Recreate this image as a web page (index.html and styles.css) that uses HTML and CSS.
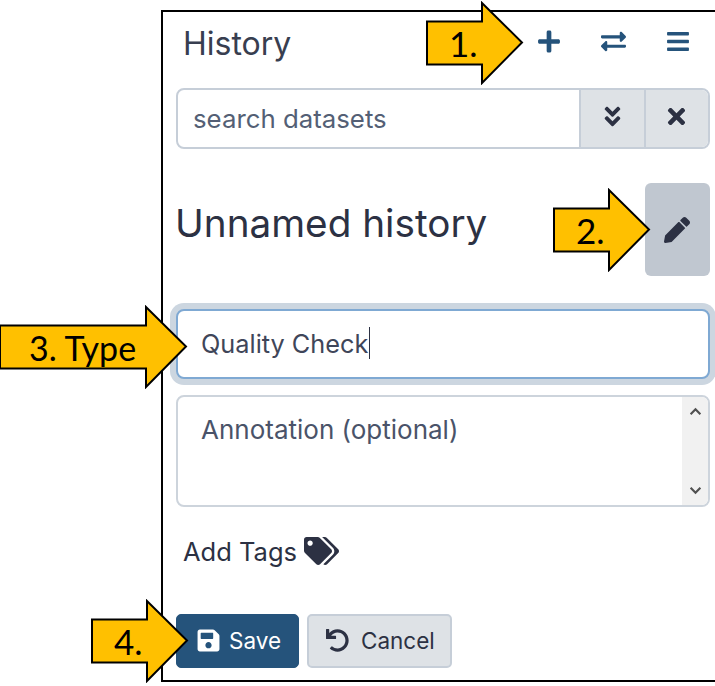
FILE: index.html
```html
<!DOCTYPE html>
<html lang="en">
<head>
  <meta charset="UTF-8">
  <title>Create a new history</title>
  <link rel="stylesheet" href="styles.css">
</head>
<body>
  <div class="panel">
    <div class="panel-header">
      <span class="panel-title">History</span>
      <div class="header-actions">
        <button class="icon-button"><svg class="icon icon-plus" viewBox="0 0 448 512"><path d="M416 208H272V64c0-17.67-14.33-32-32-32h-32c-17.67 0-32 14.33-32 32v144H32c-17.67 0-32 14.33-32 32v32c0 17.67 14.33 32 32 32h144v144c0 17.67 14.33 32 32 32h32c17.67 0 32-14.33 32-32V304h144c17.67 0 32-14.33 32-32v-32c0-17.67-14.33-32-32-32z"/></svg></button>
        <button class="icon-button"><svg class="icon icon-switch" viewBox="0 0 512 512"><path d="M0 168v-16c0-13.255 10.745-24 24-24h360V80c0-21.367 25.899-32.042 40.971-16.971l80 80c9.372 9.373 9.372 24.569 0 33.941l-80 80C409.956 271.982 384 261.456 384 240v-48H24c-13.255 0-24-10.745-24-24zm488 152H128v-48c0-21.314-25.862-32.08-40.971-16.971l-80 80c-9.372 9.373-9.372 24.569 0 33.941l80 80C102.057 463.997 128 453.437 128 432v-48h360c13.255 0 24-10.745 24-24v-16c0-13.255-10.745-24-24-24z"/></svg></button>
        <button class="icon-button"><svg class="icon icon-bars" viewBox="0 0 448 512"><path d="M16 132h416c8.837 0 16-7.163 16-16V76c0-8.837-7.163-16-16-16H16C7.163 60 0 67.163 0 76v40c0 8.837 7.163 16 16 16zm0 160h416c8.837 0 16-7.163 16-16v-40c0-8.837-7.163-16-16-16H16c-8.837 0-16 7.163-16 16v40c0 8.837 7.163 16 16 16zm0 160h416c8.837 0 16-7.163 16-16v-40c0-8.837-7.163-16-16-16H16c-8.837 0-16 7.163-16 16v40c0 8.837 7.163 16 16 16z"/></svg></button>
      </div>
    </div>

    <div class="search">
      <span class="search-text">search datasets</span>
      <button class="search-button"><svg class="icon icon-small" viewBox="0 0 320 512"><path d="M143 256.3L7 120.3c-9.4-9.4-9.4-24.6 0-33.9l22.6-22.6c9.4-9.4 24.6-9.4 33.9 0l96.4 96.4 96.4-96.4c9.4-9.4 24.6-9.4 33.9 0L313 86.3c9.4 9.4 9.4 24.6 0 33.9l-136 136c-9.4 9.5-24.6 9.5-34 .1zm34 192l136-136c9.4-9.4 9.4-24.6 0-33.9l-22.6-22.6c-9.4-9.4-24.6-9.4-33.9 0L160 352.1l-96.4-96.4c-9.4-9.4-24.6-9.4-33.9 0L7 278.3c-9.4 9.4-9.4 24.6 0 33.9l136 136c9.4 9.5 24.6 9.5 34 .1z"/></svg></button>
      <button class="search-button"><svg class="icon icon-small" viewBox="0 0 352 512"><path d="M242.72 256l100.07-100.07c12.28-12.28 12.28-32.19 0-44.48l-22.24-22.24c-12.28-12.28-32.19-12.28-44.48 0L176 189.28 75.93 89.21c-12.28-12.28-32.19-12.28-44.48 0L9.21 111.45c-12.28 12.28-12.28 32.19 0 44.48L109.28 256 9.21 356.07c-12.28 12.28-12.28 32.19 0 44.48l22.24 22.24c12.28 12.28 32.2 12.28 44.48 0L176 322.72l100.07 100.07c12.28 12.28 32.2 12.28 44.48 0l22.24-22.24c12.28-12.28 12.28-32.19 0-44.48L242.72 256z"/></svg></button>
    </div>

    <div class="name-row">
      <h1 class="history-name">Unnamed history</h1>
      <button class="edit-button"><svg class="icon icon-pen" viewBox="0 0 512 512"><path d="M497.9 142.1l-46.1 46.1c-4.7 4.7-12.3 4.7-17 0l-111-111c-4.7-4.7-4.7-12.3 0-17l46.1-46.1c18.7-18.7 49.1-18.7 67.9 0l60.1 60.1c18.8 18.7 18.8 49.1 0 67.9zM284.2 99.8L21.6 362.4.4 483.9c-2.9 16.4 11.4 30.6 27.8 27.8l121.5-21.3 262.6-262.6c4.7-4.7 4.7-12.3 0-17l-111-111c-4.8-4.7-12.4-4.7-17.1 0z"/></svg></button>
    </div>

    <div class="name-field"><span>Quality Check</span><span class="caret"></span></div>

    <div class="annotation">
      <span class="annotation-text">Annotation (optional)</span>
      <div class="scrollbar">
        <svg class="scroll-arrow" viewBox="0 0 12 8"><path d="M1.5 6.5 6 2l4.500 4.500"/></svg>
        <svg class="scroll-arrow" viewBox="0 0 12 8"><path d="M1.500 1.500 6 6l4.500-4.500"/></svg>
      </div>
    </div>

    <div class="tags-row">
      <span>Add Tags</span>
      <svg class="icon icon-tags" viewBox="0 0 640 512"><path d="M497.941 225.941L286.059 14.059A48 48 0 0 0 252.118 0H48C21.49 0 0 21.49 0 48v204.118a48 48 0 0 0 14.059 33.941l211.882 211.882c18.744 18.745 49.136 18.746 67.882 0l204.118-204.118c18.745-18.745 18.745-49.137 0-67.882zM112 160c-26.51 0-48-21.49-48-48s21.49-48 48-48 48 21.49 48 48-21.49 48-48 48zm513.941 133.823L421.823 497.941c-18.745 18.745-49.137 18.745-67.882 0l-.36-.36L527.64 323.522c16.999-16.999 26.36-39.6 26.36-63.64s-9.362-46.641-26.36-63.64L331.397 0h48.721a48 48 0 0 1 33.941 14.059l211.882 211.882c18.745 18.745 18.745 49.137 0 67.882z"/></svg>
    </div>

    <div class="form-actions">
      <button class="btn btn-save"><svg class="icon icon-btn" viewBox="0 0 448 512"><path d="M433.941 129.941l-83.882-83.882A48 48 0 0 0 316.118 32H48C21.49 32 0 53.49 0 80v352c0 26.51 21.49 48 48 48h352c26.51 0 48-21.49 48-48V163.882a48 48 0 0 0-14.059-33.941zM224 416c-35.346 0-64-28.654-64-64 0-35.346 28.654-64 64-64s64 28.654 64 64c0 35.346-28.654 64-64 64zm96-304.52V212c0 6.627-5.373 12-12 12H76c-6.627 0-12-5.373-12-12V108c0-6.627 5.373-12 12-12h228.52c3.183 0 6.235 1.264 8.485 3.515l3.48 3.48A11.996 11.996 0 0 1 320 111.48z"/></svg>Save</button>
      <button class="btn btn-cancel"><svg class="icon icon-btn" viewBox="0 0 512 512"><path d="M212.333 224.333H12c-6.627 0-12-5.373-12-12V12C0 5.373 5.373 0 12 0h48c6.627 0 12 5.373 12 12v78.112C117.773 39.279 184.26 7.47 258.175 8.007c136.906.994 246.448 111.623 246.157 248.532C504.041 393.258 393.12 504 256.333 504c-64.089 0-122.496-24.313-166.51-64.215-5.099-4.622-5.334-12.554-.467-17.42l33.967-33.967c4.474-4.474 11.662-4.717 16.401-.525C170.76 415.336 211.58 432 256.333 432c97.268 0 176-78.716 176-176 0-97.267-78.716-176-176-176-58.496 0-110.28 28.476-142.274 72.333h98.274c6.627 0 12 5.373 12 12v48c0 6.627-5.373 12-12 12z"/></svg>Cancel</button>
    </div>
  </div>

  <!-- callout arrows sit over the panel -->
  <div class="callout callout-1">
    <svg class="arrow" viewBox="0 0 98 84"><path d="M1 20.500H56V2L96 41.500 56 82V63.500H1z"/></svg>
    <span class="callout-label">1.</span>
  </div>
  <div class="callout callout-2">
    <svg class="arrow" viewBox="0 0 98 84"><path d="M1 20.500H56V2L96 41.500 56 82V63.500H1z"/></svg>
    <span class="callout-label">2.</span>
  </div>
  <div class="callout callout-3">
    <svg class="arrow" viewBox="0 0 189 84"><path d="M1 20.500H147V2L187 41.500 147 82V63.500H1z"/></svg>
    <span class="callout-label">3. Type</span>
  </div>
  <div class="callout callout-4">
    <svg class="arrow" viewBox="0 0 98 84"><path d="M1 20.500H56V2L96 41.500 56 82V63.500H1z"/></svg>
    <span class="callout-label">4.</span>
  </div>
</body>
</html>
```

FILE: styles.css
```css
html, body {
  margin: 0;
  padding: 0;
  background-color: #fff;
}
body {
  position: relative;
  width: 715px;
  height: 686px;
  overflow: hidden;
  font-family: "Inter", "Noto Sans", sans-serif;
  color: #2c3143;
}
button {
  font-family: inherit;
  cursor: pointer;
}
.icon {
  display: block;
  fill: currentColor;
}

.panel {
  box-sizing: border-box;
  width: 554px;
  height: 672px;
  margin-top: 10px;
  margin-left: 161px;
  padding: 0 5px 0 13px;
  border: 2px solid #000;
  border-right: none;
  display: flex;
  flex-direction: column;
}

.panel-header {
  display: flex;
  align-items: center;
  justify-content: space-between;
  height: 62px;
  margin-bottom: 14px;
  padding-left: 8px;
}
.panel-title {
  font-size: 32px;
  margin-left: -1px;
  color: #383e50;
}
.header-actions {
  display: flex;
  margin-bottom: 3px;
}
.icon-button {
  display: flex;
  align-items: center;
  justify-content: center;
  width: 64.5px;
  height: 50px;
  padding: 0;
  border: none;
  background: none;
  color: #25537b;
}
.icon-plus { width: 22px; height: 25px; }
.icon-switch { width: 25px; height: 25px; }
.icon-bars { width: 22px; height: 25px; }

.search {
  box-sizing: border-box;
  display: flex;
  height: 61px;
  border: 2px solid #c6ced8;
  border-radius: 8px;
  overflow: hidden;
}
.search-text {
  flex: 1;
  align-self: center;
  padding-left: 15px;
  font-size: 25.8px;
  color: #545f75;
}
.search-button {
  display: flex;
  align-items: center;
  justify-content: center;
  width: 64.5px;
  padding: 0 0 4px;
  border: none;
  border-left: 2px solid #c6ced8;
  background-color: #dee2e6;
  color: #2c3143;
}
.icon-small { width: 19px; height: 25px; }

.name-row {
  display: flex;
  align-items: center;
  justify-content: space-between;
  margin-top: 34px;
}
.history-name {
  margin: 0 0 14px -1px;
  font-size: 38.7px;
  font-weight: 400;
}
.edit-button {
  display: flex;
  align-items: center;
  justify-content: center;
  width: 65px;
  height: 93px;
  padding: 0 2px 0 0;
  border: none;
  border-radius: 6px;
  background-color: #c0c7d0;
  color: #2c3143;
}
.icon-pen { width: 26px; height: 26px; }

.name-field {
  box-sizing: border-box;
  display: flex;
  align-items: center;
  height: 70px;
  margin-top: 33px;
  padding: 0 0 2px 23px;
  border: 2px solid #7fa9d3;
  border-radius: 8px;
  box-shadow: 0 0 0 6px #ccd6e0;
  font-size: 25.3px;
  color: #3f4659;
  background-color: #fff;
}
.caret {
  width: 1px;
  height: 32px;
  margin-left: 1px;
  background-color: #2c3143;
}

.annotation {
  box-sizing: border-box;
  display: flex;
  justify-content: space-between;
  height: 112px;
  margin-top: 16px;
  border: 2px solid #cdd4dc;
  border-radius: 8px;
  overflow: hidden;
}
.annotation-text {
  padding: 17px 0 0 23px;
  font-size: 26px;
  color: #4a5369;
}
.scrollbar {
  display: flex;
  flex-direction: column;
  justify-content: space-between;
  align-items: center;
  width: 26px;
  padding: 10px 0;
  background-color: #f1f1f1;
  box-sizing: border-box;
}
.scroll-arrow {
  width: 13px;
  height: 9px;
  fill: none;
  stroke: #505050;
  stroke-width: 2;
}

.tags-row {
  display: flex;
  align-items: center;
  gap: 7px;
  height: 34px;
  margin-top: 27px;
  padding-left: 7px;
  font-size: 25.5px;
}
.icon-tags { width: 35px; height: 28px; }

.form-actions {
  display: flex;
  gap: 8px;
  margin-top: 46px;
}
.btn {
  box-sizing: border-box;
  display: flex;
  align-items: center;
  height: 54px;
  padding: 0 0 1px 17px;
  border-radius: 5px;
}
.btn-save {
  width: 123px;
  gap: 9px;
  padding-left: 20px;
  border: 1px solid #25537b;
  background-color: #25537b;
  color: #fff;
  font-size: 22.5px;
}
.btn-cancel {
  width: 145px;
  gap: 12px;
  border: 2px solid #c6ced8;
  background-color: #dee2e6;
  color: #2c3143;
  font-size: 22.5px;
}
.icon-btn { width: 23px; height: 25px; }

.callout {
  box-sizing: border-box;
  position: absolute;
  display: flex;
  align-items: center;
  height: 84px;
}
.arrow {
  position: absolute;
  top: 0;
  left: 0;
  width: 100%;
  height: 84px;
  fill: #ffc000;
  stroke: #000;
  stroke-width: 2;
}
.callout-label {
  position: relative;
  font-family: "Lato", "Open Sans", sans-serif;
  font-size: 35px;
  color: #000;
  white-space: nowrap;
}
.callout-1 { left: 426px; top: 1px; width: 98px; padding-left: 23px; }
.callout-2 { left: 553px; top: 188px; width: 98px; padding-left: 23px; }
.callout-3 { left: -1px; top: 305px; width: 189px; padding-left: 30px; }
.callout-3 .callout-label { font-size: 34px; }
.callout-4 { left: 91px; top: 599px; width: 98px; padding-left: 23px; }
```
